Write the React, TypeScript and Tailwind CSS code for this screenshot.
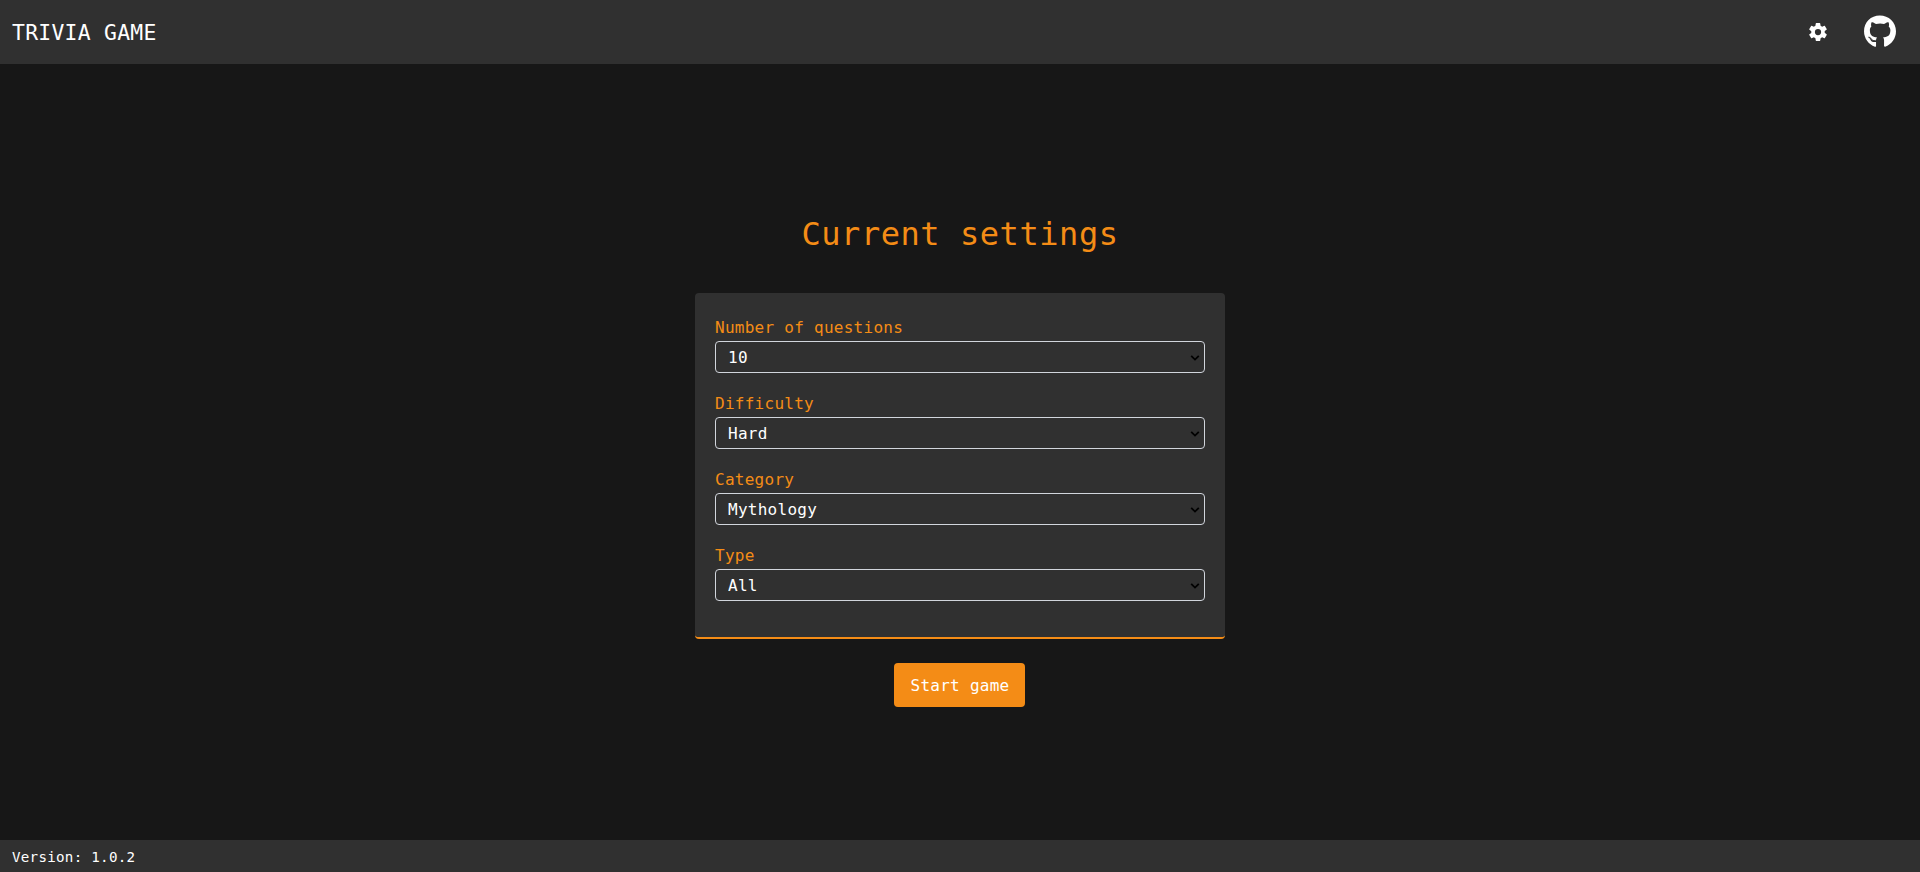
import React, { useState } from "react";
import { FaGithub } from "react-icons/fa";
import { IoSettingsSharp } from "react-icons/io5";

const FIELDS = [
  { label: "Number of questions", options: ["10", "20", "30"] },
  { label: "Difficulty", options: ["Hard", "Medium", "Easy"] },
  { label: "Category", options: ["Mythology", "History", "Sports"] },
  { label: "Type", options: ["All", "Multiple", "Boolean"] },
];

function SettingSelect({ label, options }: { label: string; options: string[] }) {
  const [value, setValue] = useState(options[0]);
  return (
    <label className="mb-4 block">
      <span className="block h-7 pt-px text-[16px] leading-7 text-[#f48c16]">{label}</span>
      <div className="grid items-center">
        <select
          value={value}
          onChange={(e) => setValue(e.target.value)}
          className="col-start-1 row-start-1 h-8 w-full appearance-none rounded border border-gray-300 bg-[#303030] px-3 pt-0.5 text-[16px] leading-7 text-white"
        >
          {options.map((option) => (
            <option key={option}>{option}</option>
          ))}
        </select>
        <svg
          viewBox="0 0 10 6"
          className="pointer-events-none col-start-1 row-start-1 mr-[5px] mt-px h-1.5 w-2.5 justify-self-end"
          fill="none"
          stroke="#000"
          strokeWidth="1.8"
        >
          <path d="M1.2 .8 5 4.6 8.8 .8" />
        </svg>
      </div>
    </label>
  );
}

export default function App() {
  return (
    <div className="flex h-screen flex-col bg-[#171717] font-['DejaVu_Sans_Mono',monospace] tracking-[0.0167em] text-white">
      <header className="flex h-16 items-center justify-between bg-[#303030] pl-3 pr-6">
        <h1 className="pt-0.5 text-[21.4px] leading-8">TRIVIA GAME</h1>
        <div className="flex items-center gap-9">
          <IoSettingsSharp className="size-5" />
          <FaGithub className="mb-px h-[33px] w-8" />
        </div>
      </header>
      <main className="flex flex-1 flex-col items-center justify-center">
        <h2 className="mb-[39px] mt-[17px] text-[32px] leading-10 tracking-[0.55px] text-[#f48c16]">Current settings</h2>
        <form className="w-[530px] rounded border-b-2 border-[#f48c16] bg-[#303030] p-5">
          {FIELDS.map((field) => (
            <SettingSelect key={field.label} {...field} />
          ))}
        </form>
        <button className="mr-px mt-6 h-11 w-[131px] rounded bg-[#f48c16] pl-px pt-px text-[16px] leading-7">Start game</button>
      </main>
      <footer className="flex h-8 items-center bg-[#303030] px-3 pt-0.5 text-[14.2px] leading-6">Version: 1.0.2</footer>
    </div>
  );
}
